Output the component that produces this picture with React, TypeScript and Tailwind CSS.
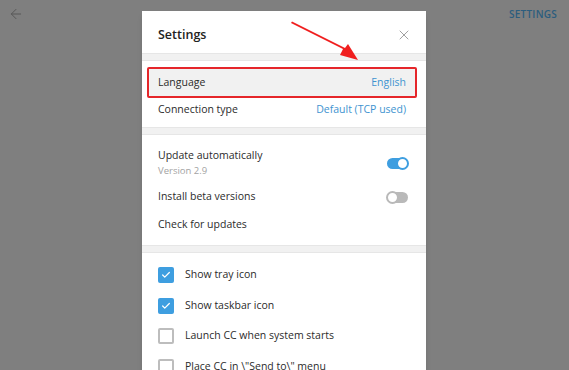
import { Check, X, ArrowLeft } from 'lucide-react'

export default function App() {
  return (
    <div className="relative h-[370px] w-[569px] overflow-hidden bg-[#7f7f7f] font-['Open_Sans',sans-serif]">
      {/* top bar behind the modal */}
      <div className="flex items-center justify-between px-2 pt-[6px]">
        <ArrowLeft className="h-[16px] w-[16px] text-[#585858]" strokeWidth={1.5} />
        <span className="pr-[4px] text-[10px] font-semibold tracking-wide text-[#2c5d7e]">SETTINGS</span>
      </div>

      {/* modal */}
      <div className="absolute left-[142px] top-[11px] w-[284px] bg-white shadow-md">
        <div className="flex h-[42px] items-center justify-between pl-[16px] pr-[14px] pt-[6px]">
          <span className="text-[12.5px] font-semibold text-[#222]">Settings</span>
          <X className="h-[16px] w-[16px] text-[#a0a0a0]" strokeWidth={1.5} />
        </div>
        <Divider />

        <div className="pt-[6px] pb-[5px]">
          <div className="ml-[5px] mr-[9px] rounded-[2px] border-2 border-[#e5262a] bg-[#f1f1f1]">
            <div className="flex h-[27px] items-center justify-between pl-[9px] pr-[9px] text-[10.5px]">
              <span className="text-[#2b2b2b]">Language</span>
              <span className="text-[#3e93d0]">English</span>
            </div>
          </div>
          <Row label="Connection type" value="Default (TCP used)" />
        </div>
        <Divider />

        <div className="pt-[13px] pb-[4px] text-[10.5px]">
          <div className="flex items-center justify-between pl-[16px] pr-[18px]">
            <div className="flex flex-col leading-[15px]">
              <span className="text-[#2b2b2b]">Update automatically</span>
              <span className="text-[9.5px] text-[#a3a3a3]">Version 2.9</span>
            </div>
            <Toggle on />
          </div>
          <div className="mt-[7px] flex h-[24px] items-center justify-between pl-[16px] pr-[18px]">
            <span className="text-[#2b2b2b]">Install beta versions</span>
            <Toggle />
          </div>
          <div className="flex h-[32px] items-center px-[16px]">
            <span className="text-[#2b2b2b]">Check for updates</span>
          </div>
        </div>
        <Divider />

        <div className="flex flex-col gap-[12.5px] px-[16px] pt-[13px] text-[10.5px]">
          <CheckRow label="Show tray icon" checked />
          <CheckRow label="Show taskbar icon" checked />
          <CheckRow label="Launch CC when system starts" />
          <CheckRow label={'Place CC in \\"Send to\\" menu'} />
        </div>
      </div>

      {/* red annotation arrow */}
      <svg className="absolute left-[288px] top-[20px]" width="75" height="45" viewBox="0 0 75 45">
        <path d="M3 3 L55 29 L52 35 L70 40 L60 24 L57 28 L4 1.5 Z" fill="#f01e1e" />
      </svg>
    </div>
  )
}

function Divider() {
  return <div className="h-[8px] border-y border-[#e6e6e6] bg-[#f1f1f1]" />
}

function Row({ label, value }: { label: string; value: string }) {
  return (
    <div className="flex h-[24px] items-center justify-between pl-[16px] pr-[20px] text-[10.5px]">
      <span className="text-[#2b2b2b]">{label}</span>
      <span className="text-[#3e93d0]">{value}</span>
    </div>
  )
}

function Toggle({ on }: { on?: boolean }) {
  return (
    <div className={`relative h-[11px] w-[21px] rounded-full ${on ? 'bg-[#3e9ee0]' : 'bg-[#b9b9b9]'}`}>
      <div
        className={`absolute top-[-1px] h-[13px] w-[13px] rounded-full border-2 bg-white ${
          on ? 'right-[-1px] border-[#3e9ee0]' : 'left-[-1px] border-[#b9b9b9]'
        }`}
      />
    </div>
  )
}

function CheckRow({ label, checked }: { label: string; checked?: boolean }) {
  return (
    <div className="flex h-[18px] items-center gap-[11px]">
      {checked ? (
        <div className="flex h-[16px] w-[16px] items-center justify-center rounded-[2px] bg-[#3e9ee0]">
          <Check className="h-[10px] w-[10px] text-white" strokeWidth={3} />
        </div>
      ) : (
        <div className="h-[16px] w-[16px] rounded-[2px] border-2 border-[#bdbdbd] bg-white" />
      )}
      <span className="text-[#2b2b2b]">{label}</span>
    </div>
  )
}
